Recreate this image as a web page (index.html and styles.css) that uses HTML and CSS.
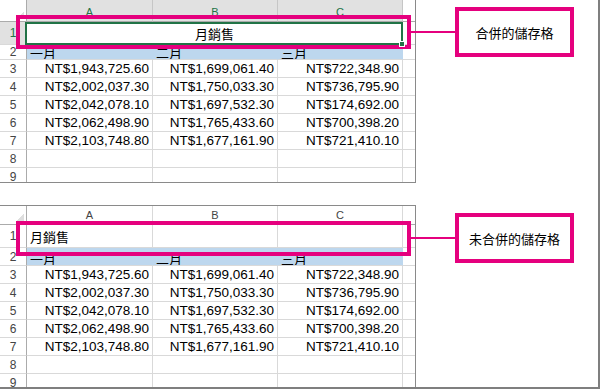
FILE: index.html
```html
<!DOCTYPE html>
<html lang="zh-Hant">
<head>
<meta charset="utf-8">
<title>合併的儲存格</title>
<link rel="stylesheet" href="styles.css">
</head>
<body>
<div class="frame">
  <section class="fig fig-top">
    <div class="sheet sheet-top">
      <div class="c corner"></div>
      <div class="c ch sel">A</div>
      <div class="c ch sel">B</div>
      <div class="c ch sel">C</div>
      <div class="c ch last"></div>

      <div class="c rh sel">1</div>
      <div class="c merged"><span class="handle"></span>月銷售</div>
      <div class="c last"></div>

      <div class="c rh">2</div>
      <div class="c mon"><span class="clip">一月</span></div>
      <div class="c mon"><span class="clip">二月</span></div>
      <div class="c mon"><span class="clip">三月</span></div>
      <div class="c last"></div>

      <div class="c rh">3</div>
      <div class="c num">NT$1,943,725.60</div>
      <div class="c num">NT$1,699,061.40</div>
      <div class="c num">NT$722,348.90</div>
      <div class="c last"></div>

      <div class="c rh">4</div>
      <div class="c num">NT$2,002,037.30</div>
      <div class="c num">NT$1,750,033.30</div>
      <div class="c num">NT$736,795.90</div>
      <div class="c last"></div>

      <div class="c rh">5</div>
      <div class="c num">NT$2,042,078.10</div>
      <div class="c num">NT$1,697,532.30</div>
      <div class="c num">NT$174,692.00</div>
      <div class="c last"></div>

      <div class="c rh">6</div>
      <div class="c num">NT$2,062,498.90</div>
      <div class="c num">NT$1,765,433.60</div>
      <div class="c num">NT$700,398.20</div>
      <div class="c last"></div>

      <div class="c rh">7</div>
      <div class="c num">NT$2,103,748.80</div>
      <div class="c num">NT$1,677,161.90</div>
      <div class="c num">NT$721,410.10</div>
      <div class="c last"></div>

      <div class="c rh">8</div>
      <div class="c"></div>
      <div class="c"></div>
      <div class="c"></div>
      <div class="c last"></div>

      <div class="c rh">9</div>
      <div class="c"></div>
      <div class="c"></div>
      <div class="c"></div>
      <div class="c last"></div>
    </div>
    <div class="mark mark-top"></div>
    <div class="link link-top"></div>
    <div class="callout callout-top">合併的儲存格</div>
  </section>

  <section class="fig fig-bottom">
    <div class="sheet sheet-bottom">
      <div class="c corner"></div>
      <div class="c ch">A</div>
      <div class="c ch">B</div>
      <div class="c ch">C</div>
      <div class="c ch last"></div>

      <div class="c rh">1</div>
      <div class="c title">月銷售</div>
      <div class="c"></div>
      <div class="c"></div>
      <div class="c last"></div>

      <div class="c rh">2</div>
      <div class="c mon"><span class="clip">一月</span></div>
      <div class="c mon"><span class="clip">二月</span></div>
      <div class="c mon"><span class="clip">三月</span></div>
      <div class="c last"></div>

      <div class="c rh">3</div>
      <div class="c num">NT$1,943,725.60</div>
      <div class="c num">NT$1,699,061.40</div>
      <div class="c num">NT$722,348.90</div>
      <div class="c last"></div>

      <div class="c rh">4</div>
      <div class="c num">NT$2,002,037.30</div>
      <div class="c num">NT$1,750,033.30</div>
      <div class="c num">NT$736,795.90</div>
      <div class="c last"></div>

      <div class="c rh">5</div>
      <div class="c num">NT$2,042,078.10</div>
      <div class="c num">NT$1,697,532.30</div>
      <div class="c num">NT$174,692.00</div>
      <div class="c last"></div>

      <div class="c rh">6</div>
      <div class="c num">NT$2,062,498.90</div>
      <div class="c num">NT$1,765,433.60</div>
      <div class="c num">NT$700,398.20</div>
      <div class="c last"></div>

      <div class="c rh">7</div>
      <div class="c num">NT$2,103,748.80</div>
      <div class="c num">NT$1,677,161.90</div>
      <div class="c num">NT$721,410.10</div>
      <div class="c last"></div>

      <div class="c rh">8</div>
      <div class="c"></div>
      <div class="c"></div>
      <div class="c"></div>
      <div class="c last"></div>

      <div class="c rh">9</div>
      <div class="c"></div>
      <div class="c"></div>
      <div class="c"></div>
      <div class="c last"></div>
    </div>
    <div class="mark mark-bottom"></div>
    <div class="link link-bottom"></div>
    <div class="callout callout-bottom">未合併的儲存格</div>
  </section>
</div>
</body>
</html>
```

FILE: styles.css
```css
* {
  box-sizing: border-box;
  margin: 0;
  padding: 0;
}

body {
  margin: 0;
  background: #ffffff;
  font-family: "Liberation Sans", "Noto Sans CJK TC", sans-serif;
  color: #000000;
}

.frame {
  width: 600px;
  height: 389px;
  border-right: 2px solid #7f7f7f;
  border-bottom: 2px solid #7f7f7f;
  display: flex;
  flex-direction: column;
  gap: 22px;
  overflow: hidden;
}

.fig {
  position: relative;
  display: flex;
  align-items: flex-start;
  flex: none;
}

.fig-top {
  height: 183px;
}

.fig-bottom {
  height: 182px;
}

/* ---------- spreadsheet ---------- */

.sheet {
  width: 416px;
  flex: none;
  border-right: 1px solid #8a8a8a;
  overflow: hidden;
  display: grid;
  grid-template-columns: 27px 126px 125px 125px 12px;
  align-content: start;
}

.sheet-top {
  height: 183px;
  border-bottom: 1px solid #8a8a8a;
  grid-template-rows: 22px 23px 15px repeat(7, 18px);
}

.sheet-bottom {
  height: 182px;
  border-top: 1px solid #8a8a8a;
  grid-template-rows: 19px 23px 18px repeat(7, 18px);
}

.c {
  border-right: 1px solid #d9d9d9;
  border-bottom: 1px solid #d9d9d9;
  display: flex;
  align-items: center;
  overflow: hidden;
  white-space: nowrap;
  font-size: 13.5px;
  min-width: 0;
  min-height: 0;
}

.c.last {
  border-right: 0;
}

.corner {
  background-color: #ffffff;
  background-image: linear-gradient(to top left, #dedede 50%, transparent 50%);
  background-size: 8px 8px;
  background-position: right 2px bottom 2px;
  background-repeat: no-repeat;
  border-right-color: #ababab;
  border-bottom-color: #ababab;
}

.ch {
  justify-content: center;
  align-items: flex-end;
  padding-bottom: 3px;
  font-size: 11px;
  color: #444444;
  border-bottom-color: #ababab;
  background: #ffffff;
}

.ch.sel {
  background: #e1e1e1;
  color: #217346;
  border-right-color: #c6c6c6;
}

.rh {
  justify-content: center;
  font-size: 12px;
  color: #444444;
  border-right-color: #ababab;
  background: #ffffff;
}

.rh.sel {
  background: #e1e1e1;
  color: #217346;
}

.merged {
  grid-column: 2 / 5;
  position: relative;
  justify-content: center;
  font-family: "Noto Sans CJK TC", sans-serif;
  font-size: 13px;
  overflow: visible;
}

.merged::before {
  content: "";
  position: absolute;
  left: -2px;
  top: 0;
  right: -1px;
  bottom: -1px;
  border: 2px solid #217346;
}

.handle {
  position: absolute;
  right: -3px;
  bottom: -3px;
  width: 6px;
  height: 6px;
  background: #217346;
  border: 1px solid #ffffff;
  z-index: 1;
}

.title {
  padding-left: 3px;
  font-family: "Noto Sans CJK TC", sans-serif;
  font-size: 13px;
}

.mon {
  background: #bdd7ee;
  border-right-color: #bdd7ee;
  align-items: flex-end;
  padding-left: 3px;
  font-family: "Noto Sans CJK TC", sans-serif;
  font-size: 13px;
}

.clip {
  display: block;
  line-height: 13px;
  margin-bottom: 0px;
}

.num {
  justify-content: flex-end;
  padding-right: 3px;
}

/* ---------- annotations ---------- */

.mark {
  position: absolute;
  left: 16px;
  width: 395px;
  border: 4px solid #e5007e;
  pointer-events: none;
}

.mark-top {
  top: 15px;
  height: 34px;
}

.mark-bottom {
  top: 16px;
  height: 35px;
}

.link {
  position: absolute;
  left: 411px;
  width: 44px;
  height: 2px;
  background: #e5007e;
}

.link-top {
  top: 31px;
}

.link-bottom {
  top: 32px;
}

.callout {
  flex: none;
  margin-left: 39px;
  width: 119px;
  height: 50px;
  border: 4px solid #e5007e;
  display: flex;
  align-items: center;
  justify-content: center;
  font-family: "Noto Sans CJK TC", sans-serif;
  font-size: 13px;
  color: #000000;
}

.callout-top {
  margin-top: 7px;
}

.callout-bottom {
  margin-top: 8px;
}
```
